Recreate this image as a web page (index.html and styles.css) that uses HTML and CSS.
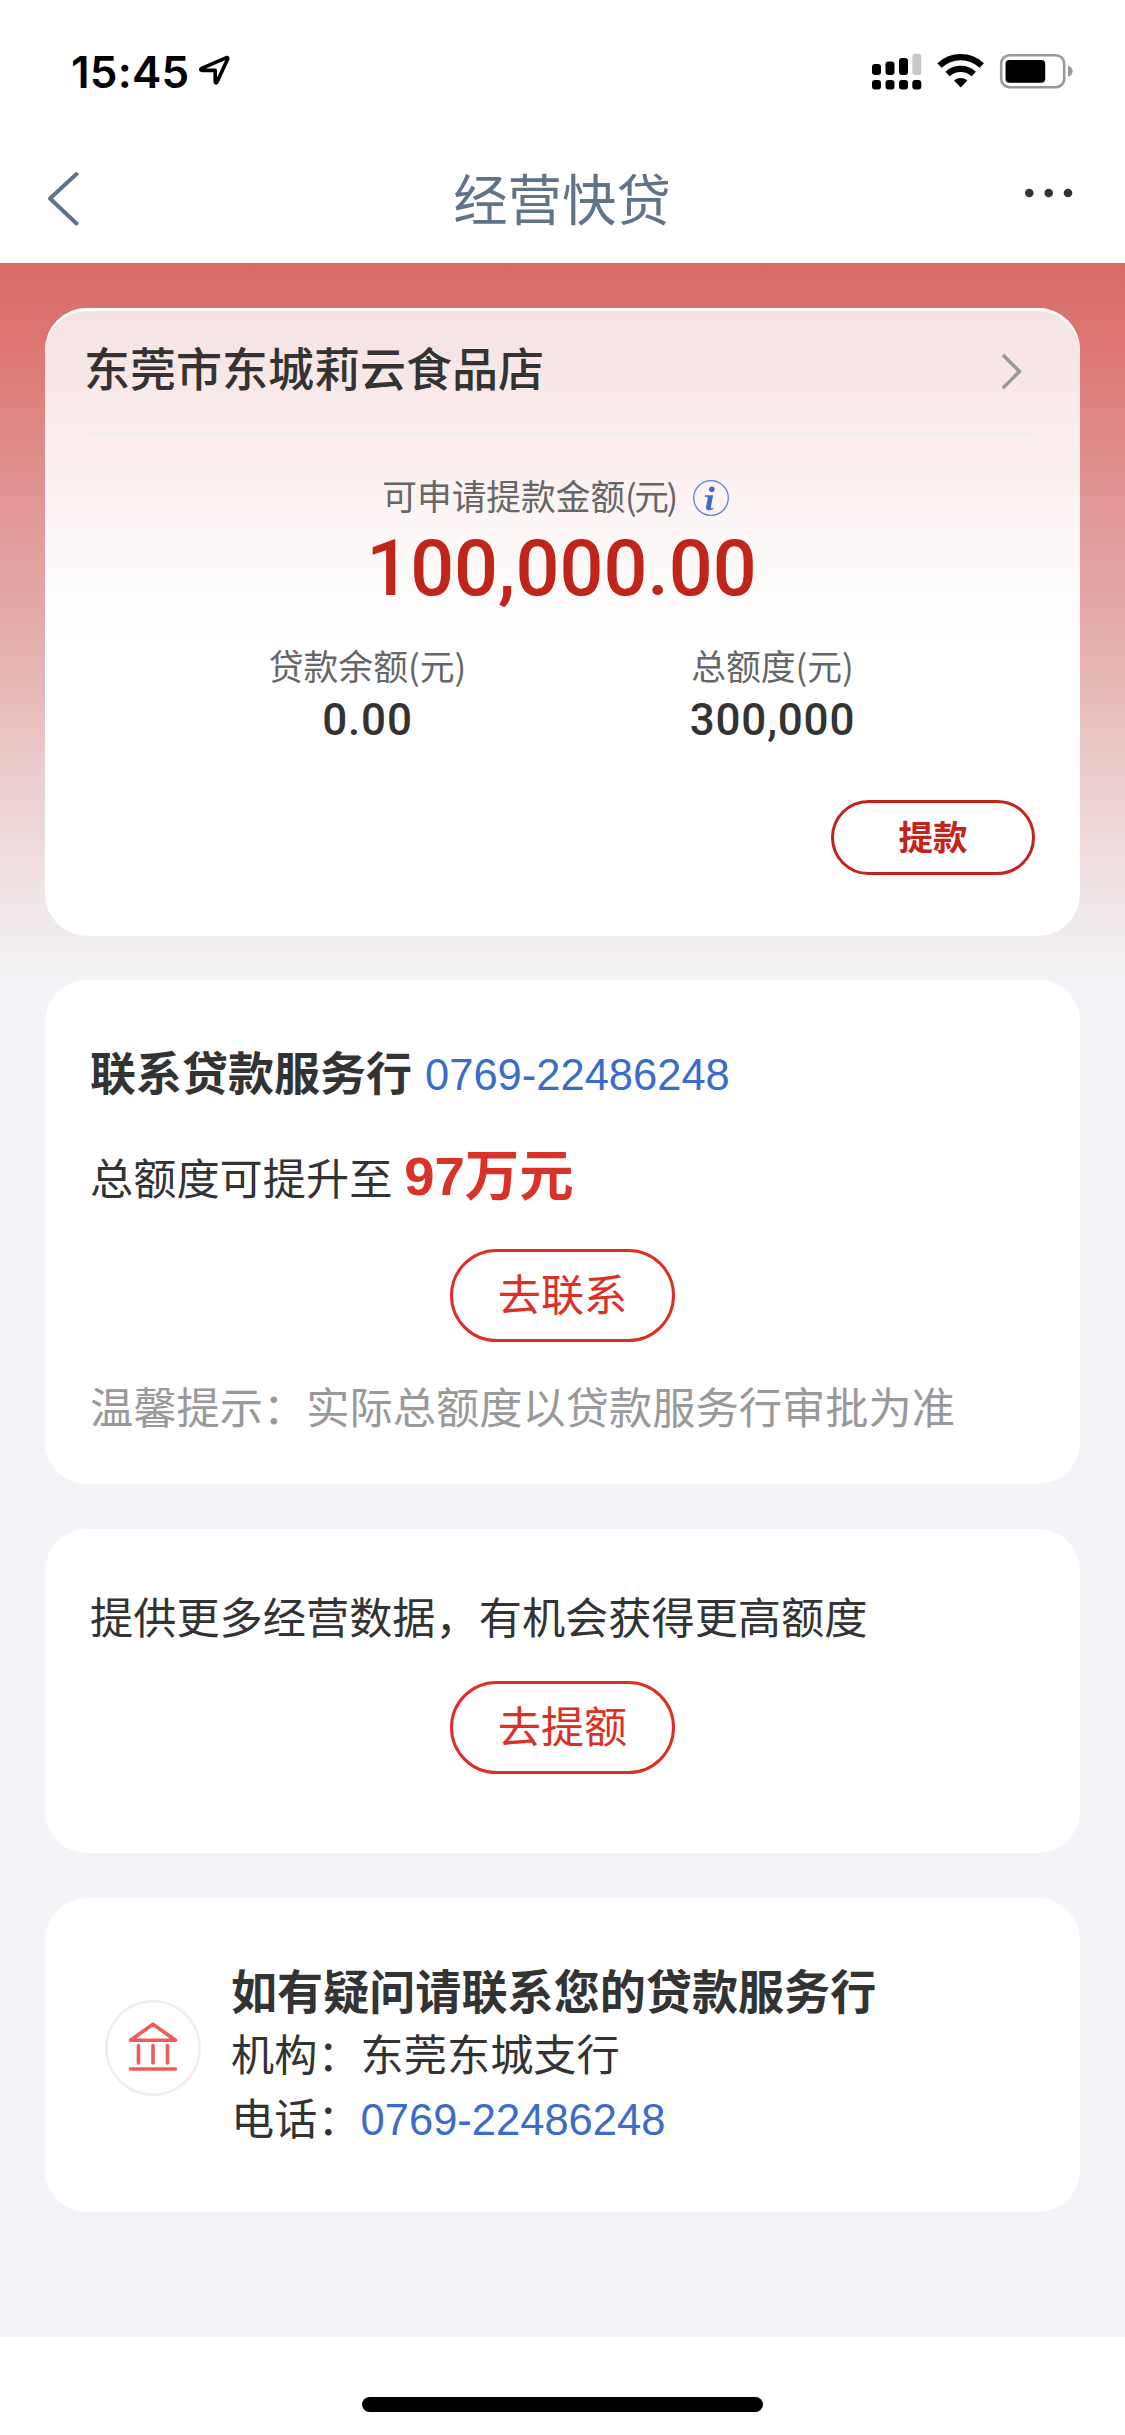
FILE: index.html
```html
<!DOCTYPE html>
<html lang="zh-CN">
<head>
<meta charset="utf-8">
<title>经营快贷</title>
<link rel="stylesheet" href="styles.css">
</head>
<body>
<header class="top">
  <div class="status">
    <span class="time">15:45</span>
    <svg class="loc" width="32" height="32" viewBox="0 0 32 32"><path d="M2.6 13.4 27 2.8Q29.4 2 28.4 4.6L18 27Q16.8 29.2 16.2 26.8V15.4H3.2Q.6 15 2.6 13.4Z" fill="none" stroke="#000" stroke-width="3.6" stroke-linejoin="round"/></svg>
    <svg class="indicators" width="204" height="40" viewBox="870 50 204 40">
      <g><rect x="872" y="64" width="9" height="11" rx="3"/><rect x="885.5" y="61.500" width="9" height="13.500" rx="3"/><rect x="899" y="58" width="9" height="17" rx="3"/><rect x="912.300" y="53.800" width="9" height="21.200" rx="3" fill="#c8c8c8"/>
      <rect x="872" y="80" width="9" height="9.500" rx="3"/><rect x="885.500" y="80" width="9" height="9.500" rx="3"/><rect x="899" y="80" width="9" height="9.500" rx="3"/><rect x="912.300" y="80" width="9" height="9.500" rx="3"/></g>
      <path d="M939.500 65.500a31 31 0 0 1 42.300 0M947.500 74a19.500 19.500 0 0 1 26.300 0" fill="none" stroke="#000" stroke-width="6.200"/>
      <path d="M954 80.500a10.500 10.500 0 0 1 13.400 0L960.700 87.600Z"/>
      <rect x="1001.200" y="55.200" width="63" height="32" rx="8.500" fill="none" stroke="#999" stroke-width="2.600"/>
      <rect x="1005.500" y="60" width="39.700" height="22.800" rx="4"/>
      <path d="M1068 66a5.300 5.300 0 0 1 0 10.500Z" fill="#999"/>
    </svg>
  </div>
  <nav class="nav">
    <svg class="back" width="32" height="56" viewBox="0 0 32 56"><path d="M29.500 3 3 27.500 29.500 52.500" fill="none" stroke="#617487" stroke-width="4" stroke-linecap="round" stroke-linejoin="round"/></svg>
    <h1 class="title">经营快贷</h1>
    <svg class="more" width="48" height="10" viewBox="0 0 48 10" fill="#333"><circle cx="4.300" cy="5" r="4.300"/><circle cx="23.700" cy="5" r="4.300"/><circle cx="43" cy="5" r="4.300"/></svg>
  </nav>
</header>

<main class="page">
  <section class="card loan">
    <div class="shop">
      <h2 class="shop-name">东莞市东城莉云食品店</h2>
      <svg class="arrow" width="20" height="36" viewBox="0 0 20 36"><path d="M2 2 17.500 17.500 2 33" fill="none" stroke="#999" stroke-width="3.600" stroke-linecap="round" stroke-linejoin="round"/></svg>
    </div>
    <div class="available">
      <div>可申请提款金额<span class="unit">(元)</span></div>
      <svg width="36" height="36" viewBox="0 0 36 36" fill="#3b6cc9"><circle cx="18" cy="18" r="17.300" fill="none" stroke="#5c84d4" stroke-width="1.300"/><circle cx="18.800" cy="9.300" r="2.800"/><path d="M12 15.200h8.200l-2.300 11.600c-.3 1.500 1 1.800 3 .8-.7 2-2.500 2.600-4.600 2.600-2.700 0-3.700-1.300-3.200-3.600l1.600-8c.2-1.200-.4-1.900-2.900-1.700z"/></svg>
    </div>
    <div class="amount">100,000.00</div>
    <div class="stats">
      <div class="stat"><span class="label">贷款余额(元)</span><span class="value">0.00</span></div>
      <div class="stat"><span class="label">总额度(元)</span><span class="value">300,000</span></div>
    </div>
    <button class="withdraw">提款</button>
  </section>

  <section class="card contact">
    <div class="contact-head"><b>联系贷款服务行</b><a class="phone">0769-22486248</a></div>
    <div class="raise">总额度可提升至<strong class="limit">97万元</strong></div>
    <button class="pill">去联系</button>
    <p class="hint">温馨提示：实际总额度以贷款服务行审批为准</p>
  </section>

  <section class="card more-data">
    <p class="text">提供更多经营数据，有机会获得更高额度</p>
    <button class="pill">去提额</button>
  </section>

  <section class="card branch">
    <svg class="bank" width="96" height="96" viewBox="0 0 96 96" fill="none" stroke="#ee5b58" stroke-width="3.600" stroke-linecap="round" stroke-linejoin="round"><circle cx="48" cy="48" r="46.700" stroke="#efefef" stroke-width="2.600"/><path d="M25.500 40.300 48 24.200 70.500 40.300ZM25.500 69H70.500M33.500 45.500V63M48 45.500V63M62.500 45.500V63"/></svg>
    <div class="branch-info">
      <h3>如有疑问请联系您的贷款服务行</h3>
      <p>机构：东莞东城支行</p>
      <p>电话：<a class="phone">0769-22486248</a></p>
    </div>
  </section>
</main>
<footer class="home"><div class="home-bar"></div></footer>
</body>
</html>
```
FILE: styles.css
```css
* { box-sizing: border-box; margin: 0; padding: 0; }
body {
  width: 1125px;
  height: 2435px;
  overflow: hidden;
  background: #fff;
  color: #333;
  font-family: "Noto Sans CJK SC", sans-serif;
  font-size: 43.2px;
}
svg { display: block; flex: none; }
button { display: block; background: #fff; font-family: inherit; text-align: center; }

.top { height: 263px; }
.status { display: flex; height: 130px; padding: 50px 51px 0 71px; }
.time { width: 128px; font: 600 44px/44px Inter, sans-serif; color: #000; letter-spacing: .2px; }
.loc { margin-top: 5px; }
.indicators { margin-left: auto; }
.nav { display: flex; justify-content: space-between; height: 133px; padding: 0 52px 0 47px; }
.back { margin-top: 41px; }
.title { margin: 27px 0 0 20px; font-size: 54.4px; font-weight: 400; line-height: 80px; color: #617487; }
.more { margin-top: 58px; }

.page {
  display: flex;
  flex-direction: column;
  height: 2074px;
  padding: 45px 45px 0;
  background: linear-gradient(#d96b65 0, #dc7470 65px, #df918f 210px, #e5b1b0 387px, #ebcaca 500px, #efdfe0 600px, #f1edef 680px, #f4f5f8 722px);
}
.card { flex: none; margin-bottom: 45px; border-radius: 42px; background: #fff; }

.loan {
  height: 628px;
  margin-bottom: 44px;
  box-shadow: inset 0 3px 0 #fff;
  background: linear-gradient(#f6e2e2 0, #f9e9e9 90px, #fcf2f2 180px, #fdf9f9 255px, #fff 340px);
}
.shop { display: flex; justify-content: space-between; height: 127px; margin: 0 47px 0 46px; padding: 0 11.5px 0 0; border-bottom: 3px solid #efedef; }
.shop-name { margin-left: -7px; font-size: 46px; font-weight: 500; line-height: 117px; }
.arrow { margin-top: 46px; }
.available { display: flex; justify-content: center; gap: 17px; height: 50px; margin-top: 35px; padding-right: 14px; font-size: 34.7px; line-height: 50px; color: #666; }
.available svg { margin-top: 10px; }
.unit { letter-spacing: -2.5px; }
.amount { margin: 9px 2px 0 0; text-align: center; font: 500 77.4px/80px Roboto, sans-serif; color: #bf2519; }
.stats { display: grid; grid-template-columns: 405px 405px; margin: 31px 0 0 120px; }
.stat { display: flex; flex-direction: column; gap: 5px; text-align: center; }
.label { font-size: 34.8px; line-height: 50px; color: #666; }
.value { font: 500 44px/50px Roboto, sans-serif; letter-spacing: .8px; }
.withdraw { width: 204px; height: 75px; margin: 55px 45px 0 auto; border: 3px solid #c4231a; border-radius: 38px; padding-bottom: 5px; font-size: 34.5px; font-weight: 700; line-height: 64px; color: #c4231a; }

.contact { height: 504px; padding: 60px 45px 0; }
.contact-head { height: 60px; font-size: 46px; line-height: 60px; }
.phone { margin-left: 13px; font: 43.5px/1 "Liberation Sans", sans-serif; color: #3b6cc9; }
.raise { height: 80px; margin-top: 35.6px; line-height: 80px; }
.limit { margin-left: 12px; font: 700 54.4px/0 "Liberation Sans", "Noto Sans CJK SC", sans-serif; color: #d93226; }
.pill { width: 225px; height: 93px; margin: 33px auto 0; border: 3px solid #dc3024; border-radius: 47px; padding-bottom: 6px; font-size: 43.2px; line-height: 81px; color: #dc3024; }
.hint { margin-top: 33px; font-size: 43.25px; line-height: 60px; color: #999; }

.more-data { height: 324px; padding: 56px 45px 0; }
.more-data .text { line-height: 60px; }
.more-data .pill { margin-top: 36px; }

.branch { display: flex; gap: 30px; height: 314px; padding: 60px 60px 0; }
.bank { margin-top: 42px; }
.branch-info h3 { font-size: 46.1px; line-height: 62px; }
.branch-info p { height: 64px; line-height: 64px; }
.branch-info .phone { margin-left: 0; }

.home { height: 98px; padding-top: 60px; }
.home-bar { width: 401px; height: 15px; margin: 0 auto; border-radius: 8px; background: #000; }
```
